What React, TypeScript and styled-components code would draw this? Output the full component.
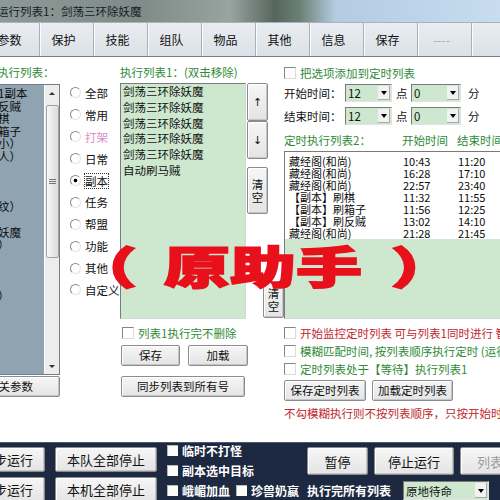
import React from 'react'
import styled, { createGlobalStyle } from 'styled-components'

const FONT = `"Noto Sans CJK SC", "Liberation Sans", sans-serif`

const GlobalStyle = createGlobalStyle`
  html, body { margin: 0; padding: 0; background: #fff; }
  body { font-family: ${FONT}; }
`

const Window = styled.div`
  position: relative;
  width: 500px;
  height: 500px;
  overflow: hidden;
  background: #fff;
  font-family: ${FONT};
  font-size: 11.5px;
  color: #111;
  display: flex;
  flex-direction: column;
`

const TitleBar = styled.div`
  flex: none;
  height: 22px;
  display: flex;
  align-items: center;
  background: linear-gradient(90deg, #8d9997 0%, #7e8b87 28%, #98a4a0 46%, #56665d 55%, #6c8175 60%, #b4cbe0 67%, #c7dcef 100%);
`

const TitleText = styled.span`
  margin-left: -3px;
  font-size: 11.5px;
  line-height: 22px;
  color: #161b1f;
  white-space: nowrap;
`

const TabBar = styled.div`
  flex: none;
  height: 35px;
  box-sizing: border-box;
  display: flex;
  background: linear-gradient(#e9edf1, #dce1e7);
  border-top: 1px solid #a9b3bf;
  border-bottom: 1px solid #78818d;
`

const Tab = styled.div<{ $first?: boolean; $dim?: boolean }>`
  flex: none;
  width: 54px;
  margin-left: ${p => (p.$first ? '-14px' : '0')};
  box-sizing: border-box;
  padding-right: 6px;
  display: flex;
  align-items: center;
  justify-content: center;
  border-right: 1px solid #a9b0b9;
  box-shadow: 1px 0 0 #fbfcfd;
  font-size: 12px;
  color: ${p => (p.$dim ? '#a9a9a9' : '#111')};
`

const Main = styled.div`
  position: relative;
  flex: none;
  height: 385px;
  display: flex;
  align-items: flex-start;
`

const LeftCol = styled.div`
  flex: none;
  width: 62px;
  padding-top: 8px;
  display: flex;
  flex-direction: column;
`

const GreenLabel = styled.div<{ $indent?: number }>`
  height: 15px;
  line-height: 15px;
  margin-left: ${p => p.$indent ?? 0}px;
  color: #2f8a36;
  white-space: nowrap;
`

const SideList = styled.div`
  margin-top: 4px;
  width: 60px;
  height: 291px;
  box-sizing: border-box;
  display: flex;
  background: #fff;
  border: 1px solid #6f7f8a;
  border-left: none;
`

const SideItems = styled.div`
  width: 44px;
  padding-top: 2px;
  overflow: hidden;
  background: #8fa3b0;
`

const SideItem = styled.div`
  height: 12.6px;
  line-height: 12.6px;
  margin-left: -2px;
  white-space: nowrap;
  color: #0d0d0d;
`

const ScrollTrack = styled.div`
  width: 14px;
  margin-left: 1px;
  display: flex;
  flex-direction: column;
  align-items: center;
  background: #ededed;
`

const ScrollArrow = styled.div`
  flex: none;
  width: 100%;
  height: 16px;
  display: flex;
  align-items: center;
  justify-content: center;
`

const Tri = styled.span<{ $down?: boolean }>`
  width: 0;
  height: 0;
  border-left: 3px solid transparent;
  border-right: 3px solid transparent;
  ${p => (p.$down ? 'border-top: 3px solid #333;' : 'border-bottom: 3px solid #333;')}
`

const ScrollThumb = styled.div`
  flex: none;
  margin-top: 4px;
  width: 13px;
  height: 153px;
  box-sizing: border-box;
  display: flex;
  align-items: center;
  justify-content: center;
  border: 1px solid #a4a4a4;
  border-radius: 2px;
  background: linear-gradient(90deg, #f7f7f7, #dcdcdc);
`

const ScrollSpacer = styled.div`
  flex: 1;
`

const RadioCol = styled.div`
  flex: none;
  width: 58px;
  box-sizing: border-box;
  padding: 25px 0 0 8px;
`

const RadioRow = styled.div`
  height: 21.9px;
  display: flex;
  align-items: center;
  gap: 4px;
  white-space: nowrap;
`

const RadioDot = styled.span<{ $on?: boolean }>`
  flex: none;
  width: 11px;
  height: 11px;
  box-sizing: border-box;
  border-radius: 50%;
  border: 1px solid;
  border-color: #8a8a8a #e4e4e4 #e4e4e4 #8a8a8a;
  background: ${p => (p.$on ? 'radial-gradient(circle, #000 0 1.6px, #fff 2.2px)' : '#fff')};
`

const RadioText = styled.span<{ $pink?: boolean; $focus?: boolean }>`
  color: ${p => (p.$pink ? '#dc8cc4' : '#111')};
  line-height: 14px;
  outline: ${p => (p.$focus ? '1px dotted #333' : 'none')};
`

const MidCol = styled.div`
  flex: none;
  width: 164px;
  padding-top: 8px;
  display: flex;
  flex-direction: column;
`

const ListRow = styled.div`
  margin-top: 3px;
  height: 236px;
  display: flex;
  gap: 1px;
`

const GreenList = styled.div`
  flex: none;
  width: 126px;
  box-sizing: border-box;
  padding-left: 2px;
  background: #cde8cf;
  border: 1px solid;
  border-color: #7a7a7a #d6d6d6 #d6d6d6 #7a7a7a;
`

const ListItem = styled.div`
  height: 15.8px;
  line-height: 15.8px;
  white-space: nowrap;
`

const SideBtns = styled.div`
  flex: 1;
  display: flex;
  flex-direction: column;
  align-items: flex-start;
`

const Btn = styled.button<{ $w: number; $h: number; $size?: number; $dim?: boolean; $ml?: number; $mt?: number }>`
  flex: none;
  width: ${p => p.$w}px;
  height: ${p => p.$h}px;
  margin: ${p => p.$mt ?? 0}px 0 0 ${p => p.$ml ?? 0}px;
  padding: 0;
  font-family: ${FONT};
  font-size: ${p => p.$size ?? 11.5}px;
  line-height: 13px;
  color: ${p => (p.$dim ? '#9c9c9c' : '#111')};
  background: linear-gradient(#f6f6f6, #e4e4e4);
  border: 1px solid #8c8c8c;
  border-radius: 2px;
  box-shadow: inset 1px 1px 0 #fff, inset -1px -1px 0 #c6c6c6;
  white-space: nowrap;
`

const ArrowGlyph = styled.span`
  font-family: "DejaVu Sans", sans-serif;
  font-size: 11px;
`

const CheckRow = styled.div<{ $h?: number; $mt?: number; $ml?: number }>`
  height: ${p => p.$h ?? 14}px;
  margin: ${p => p.$mt ?? 0}px 0 0 ${p => p.$ml ?? 0}px;
  display: flex;
  align-items: center;
  gap: 4px;
  white-space: nowrap;
`

const Check = styled.span`
  flex: none;
  width: 12px;
  height: 12px;
  box-sizing: border-box;
  background: #fff;
  border: 1px solid;
  border-color: #858585 #dcdcdc #dcdcdc #858585;
`

const Tinted = styled.span<{ $c: string }>`
  color: ${p => p.$c};
`

const BtnRow = styled.div<{ $mt: number; $gap: number; $ml?: number }>`
  display: flex;
  gap: ${p => p.$gap}px;
  margin: ${p => p.$mt}px 0 0 ${p => p.$ml ?? 0}px;
`

const RightCol = styled.div`
  flex: 1;
  min-width: 0;
  padding-top: 9px;
  display: flex;
  flex-direction: column;
`

const TimeRow = styled.div<{ $mt: number }>`
  margin-top: ${p => p.$mt}px;
  height: 18px;
  display: flex;
  align-items: center;
  white-space: nowrap;
`

const TimeLabel = styled.span`
  width: 61px;
  flex: none;
`

const Unit = styled.span<{ $ml: number; $w: number }>`
  flex: none;
  width: ${p => p.$w}px;
  margin-left: ${p => p.$ml}px;
`

const Combo = styled.div<{ $w: number; $h?: number }>`
  flex: none;
  width: ${p => p.$w}px;
  height: ${p => p.$h ?? 18}px;
  box-sizing: border-box;
  display: flex;
  align-items: center;
  justify-content: space-between;
  padding-left: 2px;
  background: #cde8cf;
  border: 1px solid;
  border-color: #7a7a7a #e2e2e2 #e2e2e2 #7a7a7a;
  color: #111;
  font-size: 11.5px;
`

const ComboBtn = styled.span`
  flex: none;
  width: 12px;
  height: calc(100% - 2px);
  margin-right: 1px;
  display: flex;
  align-items: center;
  justify-content: center;
  background: #f2f2f2;
  box-shadow: inset -1px -1px 0 #a8a8a8;
`

const ComboTri = styled.span`
  width: 0;
  height: 0;
  border-left: 3.5px solid transparent;
  border-right: 3.5px solid transparent;
  border-top: 4px solid #000;
`

const Grid3 = styled.div<{ $first: number }>`
  display: grid;
  grid-template-columns: ${p => p.$first}px 55px auto;
  white-space: nowrap;
`

const ListHeader = styled(Grid3)`
  margin-top: 8px;
  height: 14px;
  line-height: 14px;
  color: #2f8a36;
`

const TimerList = styled.div`
  margin-top: 4px;
  width: 230px;
  height: 168px;
  box-sizing: border-box;
  background: #cde8cf;
  border: 1px solid;
  border-color: #7a7a7a #d6d6d6 #d6d6d6 #7a7a7a;
`

const TimerRows = styled.div`
  background: #fff;
  padding: 3px 0 0 4px;
`

const TimerRow = styled(Grid3)`
  height: 12px;
  line-height: 12px;
  font-size: 11px;
  color: #0c0c0c;
`

const RedNote = styled.div`
  margin-top: 5px;
  height: 14px;
  line-height: 14px;
  color: #c0262c;
  white-space: nowrap;
`

const Stamp = styled.div`
  position: absolute;
  left: 83px;
  top: 186px;
  display: flex;
  font-size: 44px;
  line-height: 44px;
  font-weight: 900;
  color: #e8101a;
  -webkit-text-stroke: 1.6px #e8101a;
  transform: scaleX(1.5);
  transform-origin: 0 50%;
  white-space: pre;
  pointer-events: none;
`

const StampPart = styled.span<{ $ml?: number; $mr?: number }>`
  display: inline-block;
  margin-left: ${p => p.$ml ?? 0}px;
  margin-right: ${p => p.$mr ?? 0}px;
`

const BottomBar = styled.div`
  flex: none;
  height: 58px;
  box-sizing: border-box;
  display: flex;
  align-items: flex-start;
  background: #1c2940;
  border-top: 1px solid #4b5972;
`

const BtnStack = styled.div<{ $ml: number; $w: number }>`
  flex: none;
  width: ${p => p.$w}px;
  margin: 4px 0 0 ${p => p.$ml}px;
  display: flex;
  flex-direction: column;
  gap: 5px;
`

const RightArea = styled.div`
  flex: none;
  margin-left: 10px;
  display: flex;
  flex-direction: column;
`

const TopPart = styled.div`
  height: 38px;
  display: flex;
  align-items: flex-start;
`

const CheckStack = styled.div`
  flex: none;
  width: 140px;
  margin-top: -3px;
`

const DarkCheckRow = styled.div<{ $w?: number }>`
  flex: none;
  ${p => (p.$w ? `width: ${p.$w}px;` : '')}
  height: 20px;
  display: flex;
  align-items: center;
  gap: 4px;
  white-space: nowrap;
  color: #fff;
  font-weight: bold;
  font-size: 12px;
`

const WhiteBox = styled.span`
  flex: none;
  width: 11px;
  height: 11px;
  background: #fbfbfb;
  box-shadow: inset 1px 1px 0 #b8b8b8;
`

const BottomRow = styled.div`
  height: 19px;
  display: flex;
  align-items: center;
`

const WhiteText = styled.span<{ $w: number }>`
  flex: none;
  width: ${p => p.$w}px;
  color: #fff;
  font-weight: bold;
  font-size: 12px;
  white-space: nowrap;
`

const tabs = ['参数', '保护', '技能', '组队', '物品', '其他', '信息', '保存', '----', '']

const sideItems = ['1副本', '反贼', '棋', '箱子', '小）', '人）', '', '', '', '纹）', '', '妖魔', '）', '', '', '', '）']

const radios = ['全部', '常用', '打架', '日常', '副本', '任务', '帮盟', '功能', '其他', '自定义']

const list1 = ['剑荡三环除妖魔', '剑荡三环除妖魔', '剑荡三环除妖魔', '剑荡三环除妖魔', '剑荡三环除妖魔', '自动刷马贼']

const timers = [
  ['藏经阁(和尚)', '10:43', '11:20'],
  ['藏经阁(和尚)', '16:28', '17:10'],
  ['藏经阁(和尚)', '22:57', '23:40'],
  ['【副本】刷棋', '11:32', '11:55'],
  ['【副本】刷箱子', '11:56', '12:25'],
  ['【副本】刷反贼', '13:02', '14:10'],
  ['藏经阁(和尚)', '21:28', '21:45'],
]

const Grip = () => (
  <svg width="7" height="6" viewBox="0 0 7 6">
    <path d="M0 0.5H7M0 2.5H7M0 4.5H7" stroke="#777" strokeWidth="1" />
  </svg>
)

const App: React.FC = () => {
  return (
    <>
      <GlobalStyle />
      <Window>
        <TitleBar>
          <TitleText>运行列表1：剑荡三环除妖魔</TitleText>
        </TitleBar>
        <TabBar>
          {tabs.map((t, i) => (
            <Tab key={i} $first={i === 0} $dim={t === '----'}>
              {t}
            </Tab>
          ))}
        </TabBar>
        <Main>
          <LeftCol>
            <GreenLabel $indent={-3}>执行列表：</GreenLabel>
            <SideList>
              <SideItems>
                {sideItems.map((t, i) => (
                  <SideItem key={i}>{t}</SideItem>
                ))}
              </SideItems>
              <ScrollTrack>
                <ScrollArrow>
                  <Tri />
                </ScrollArrow>
                <ScrollThumb>
                  <Grip />
                </ScrollThumb>
                <ScrollSpacer />
                <ScrollArrow>
                  <Tri $down />
                </ScrollArrow>
              </ScrollTrack>
            </SideList>
            <Btn $w={100} $h={21} $ml={-40} $mt={1}>
              相关参数
            </Btn>
          </LeftCol>

          <RadioCol>
            {radios.map(r => (
              <RadioRow key={r}>
                <RadioDot $on={r === '副本'} />
                <RadioText $pink={r === '打架'} $focus={r === '副本'}>
                  {r}
                </RadioText>
              </RadioRow>
            ))}
          </RadioCol>

          <MidCol>
            <GreenLabel>执行列表1：(双击移除)</GreenLabel>
            <ListRow>
              <GreenList>
                {list1.map((t, i) => (
                  <ListItem key={i}>{t}</ListItem>
                ))}
              </GreenList>
              <SideBtns>
                <Btn $w={21} $h={38}>
                  <ArrowGlyph>↑</ArrowGlyph>
                </Btn>
                <Btn $w={21} $h={38}>
                  <ArrowGlyph>↓</ArrowGlyph>
                </Btn>
                <Btn $w={21} $h={47} $mt={8}>
                  清<br />空
                </Btn>
                <Btn $w={21} $h={36} $ml={16} $mt={68}>
                  清<br />空
                </Btn>
              </SideBtns>
            </ListRow>
            <CheckRow $mt={7} $ml={2}>
              <Check />
              <Tinted $c="#2f8a36">列表1执行完不删除</Tinted>
            </CheckRow>
            <BtnRow $mt={5} $gap={8} $ml={1}>
              <Btn $w={59} $h={21}>保存</Btn>
              <Btn $w={60} $h={21}>加载</Btn>
            </BtnRow>
            <Btn $w={124} $h={21} $ml={1} $mt={10}>
              同步列表到所有号
            </Btn>
          </MidCol>

          <RightCol>
            <CheckRow>
              <Check />
              <Tinted $c="#2f8a36">把选项添加到定时列表</Tinted>
            </CheckRow>
            <TimeRow $mt={4}>
              <TimeLabel>开始时间：</TimeLabel>
              <Combo $w={47}>
                12
                <ComboBtn>
                  <ComboTri />
                </ComboBtn>
              </Combo>
              <Unit $ml={4} $w={15}>点</Unit>
              <Combo $w={50}>
                0
                <ComboBtn>
                  <ComboTri />
                </ComboBtn>
              </Combo>
              <Unit $ml={7} $w={14}>分</Unit>
            </TimeRow>
            <TimeRow $mt={5}>
              <TimeLabel>结束时间：</TimeLabel>
              <Combo $w={47}>
                12
                <ComboBtn>
                  <ComboTri />
                </ComboBtn>
              </Combo>
              <Unit $ml={4} $w={15}>点</Unit>
              <Combo $w={50}>
                0
                <ComboBtn>
                  <ComboTri />
                </ComboBtn>
              </Combo>
              <Unit $ml={7} $w={14}>分</Unit>
            </TimeRow>
            <ListHeader $first={118}>
              <span>定时执行列表2：</span>
              <span>开始时间</span>
              <span>结束时间</span>
            </ListHeader>
            <TimerList>
              <TimerRows>
                {timers.map((r, i) => (
                  <TimerRow key={i} $first={114}>
                    <span>{r[0]}</span>
                    <span>{r[1]}</span>
                    <span>{r[2]}</span>
                  </TimerRow>
                ))}
              </TimerRows>
            </TimerList>
            <CheckRow $h={18} $mt={5}>
              <Check />
              <Tinted $c="#c0262c">开始监控定时列表 可与列表1同时进行 智能</Tinted>
            </CheckRow>
            <CheckRow $h={18}>
              <Check />
              <Tinted $c="#2f8a36">模糊匹配时间, 按列表顺序执行定时 (运行</Tinted>
            </CheckRow>
            <CheckRow $h={18}>
              <Check />
              <Tinted $c="#2f8a36">定时列表处于【等待】执行列表1</Tinted>
            </CheckRow>
            <BtnRow $mt={2} $gap={6}>
              <Btn $w={82} $h={21}>保存定时列表</Btn>
              <Btn $w={81} $h={21}>加载定时列表</Btn>
            </BtnRow>
            <RedNote>不勾模糊执行则不按列表顺序，只按开始时间</RedNote>
          </RightCol>

          <Stamp>
            <StampPart $ml={-8} $mr={8}>（</StampPart>
            <StampPart> 原助手 </StampPart>
            <StampPart $ml={9}>）</StampPart>
          </Stamp>
        </Main>

        <BottomBar>
          <BtnStack $ml={-31} $w={76}>
            <Btn $w={76} $h={25} $size={13}>同步运行</Btn>
            <Btn $w={76} $h={25} $size={13}>同步运行</Btn>
          </BtnStack>
          <BtnStack $ml={10} $w={102}>
            <Btn $w={102} $h={25} $size={13}>本队全部停止</Btn>
            <Btn $w={102} $h={25} $size={13}>本机全部停止</Btn>
          </BtnStack>
          <RightArea>
            <TopPart>
              <CheckStack>
                <DarkCheckRow>
                  <WhiteBox />
                  临时不打怪
                </DarkCheckRow>
                <DarkCheckRow>
                  <WhiteBox />
                  副本选中目标
                </DarkCheckRow>
              </CheckStack>
              <BtnRow $mt={4} $gap={6}>
                <Btn $w={61} $h={28} $size={13}>暂停</Btn>
                <Btn $w={80} $h={28} $size={13}>停止运行</Btn>
                <Btn $w={60} $h={28} $size={13} $dim>列表</Btn>
              </BtnRow>
            </TopPart>
            <BottomRow>
              <DarkCheckRow $w={69}>
                <WhiteBox />
                峨嵋加血
              </DarkCheckRow>
              <DarkCheckRow $w={71}>
                <WhiteBox />
                珍兽奶嬴
              </DarkCheckRow>
              <WhiteText $w={96}>执行完所有列表</WhiteText>
              <Combo $w={86} $h={19}>
                原地待命
                <ComboBtn>
                  <ComboTri />
                </ComboBtn>
              </Combo>
            </BottomRow>
          </RightArea>
        </BottomBar>
      </Window>
    </>
  )
}

export default App
